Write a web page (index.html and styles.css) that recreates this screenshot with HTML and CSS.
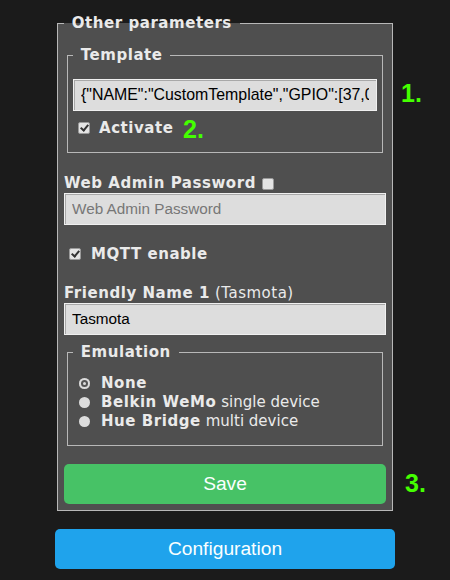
FILE: index.html
```html
<!DOCTYPE html>
<html>
<head>
<meta charset="utf-8">
<link rel="stylesheet" href="styles.css">
</head>
<body>
<div class="wrap">
  <fieldset class="outer">
    <legend><b>&nbsp;Other parameters&nbsp;</b></legend>
    <fieldset class="inner tpl">
      <legend><b>&nbsp;Template&nbsp;</b></legend>
      <input class="field tplfield" type="text" value='{"NAME":"CustomTemplate","GPIO":[37,0,0,0,0,0,0,0,0,0,0,0,0],"FLAG":0,"BASE":18}'>
      <div class="check-row act">
        <span class="cb checked"></span><b>Activate</b><span class="num num2">2.</span>
      </div>
    </fieldset>
    <div class="label-row pw"><b>Web Admin Password</b><span class="cb"></span></div>
    <input class="field" type="text" placeholder="Web Admin Password">
    <div class="check-row mqtt"><span class="cb checked"></span><b>MQTT enable</b></div>
    <div class="label-row fn"><b>Friendly Name 1</b><span class="paren">(Tasmota)</span></div>
    <input class="field" type="text" value="Tasmota">
    <fieldset class="inner emu">
      <legend><b>&nbsp;Emulation&nbsp;</b></legend>
      <div class="radios">
        <div class="radio-row"><span class="rb sel"></span><b>None</b></div>
        <div class="radio-row"><span class="rb"></span><b>Belkin WeMo</b> single device</div>
        <div class="radio-row"><span class="rb"></span><b>Hue Bridge</b> multi device</div>
      </div>
    </fieldset>
    <button class="btn save">Save</button>
  </fieldset>
  <button class="btn config">Configuration</button>
</div>
<span class="num num1">1.</span>
<span class="num num3">3.</span>
</body>
</html>
```
FILE: styles.css
```css
html, body {
  margin: 0;
  padding: 0;
  background: #1b1b1b;
}
body {
  font-family: "DejaVu Sans", Verdana, sans-serif;
  font-size: 15px;
  color: #eaeaea;
  width: 450px;
  height: 580px;
  position: relative;
  overflow: hidden;
}
b {
  font-weight: bold;
  letter-spacing: 0.55px;
}
.wrap {
  width: 340px;
  margin: 0 auto;
  padding-top: 13px;
}
fieldset {
  margin: 0;
  border: 1px solid #b8b8b8;
  background: #4f4f4f;
  min-width: 0;
}
legend {
  padding: 0 2px;
  line-height: 20px;
  font-size: 15px;
}
.outer {
  margin: 0 2px;
  padding: 0 6px 6px;
}
.inner {
  margin: 0 3px;
  padding: 0 5px;
}
.tpl {
  margin-top: 12px;
  padding-top: 14px;
  padding-bottom: 14px;
}
.field {
  display: block;
  width: 100%;
  box-sizing: border-box;
  height: 32px;
  margin: 0;
  padding: 0 7px;
  background: #dddddd;
  color: #000;
  border: 1px solid #f0f0f0;
  box-shadow: inset 1px 1px 0 #a8a8a8;
  border-radius: 0;
  font-family: "Liberation Sans", Arial, sans-serif;
  font-size: 15.3px;
  outline: none;
}
.tplfield { font-size: 15.9px; }
.field::placeholder { color: #777777; }
.check-row, .label-row {
  line-height: 20px;
  display: flex;
  align-items: center;
}
.act { margin-top: 7px; position: relative; }
.act .cb { margin: 0 9px 0 5px; }
.cb {
  display: inline-block;
  width: 12px;
  height: 12px;
  box-sizing: border-box;
  background: #e4e4e4;
  border: 1px solid #9a9a9a;
  border-radius: 2px;
  position: relative;
  flex: none;
}
.cb.checked::after {
  content: "";
  position: absolute;
  left: 3px;
  top: 0px;
  width: 3px;
  height: 6px;
  border: solid #333;
  border-width: 0 2px 2px 0;
  transform: rotate(40deg);
}
.pw { margin-top: 20px; }
.pw .cb { margin-left: 6px; margin-top: 1px; }
.mqtt { margin-top: 19px; }
.mqtt .cb { margin: 0 10px 0 5px; }
.fn { margin-top: 19px; }
.fn b { margin-right: 5px; }
.paren { letter-spacing: 0.5px; }
.emu {
  margin-top: 7px;
  padding-top: 12px;
  padding-bottom: 14px;
}
.radios { line-height: 19px; }
.radio-row { display: flex; align-items: center; }
.radio-row b { margin-right: 5px; }
.rb {
  display: inline-block;
  width: 11px;
  height: 11px;
  border-radius: 50%;
  background: #dcdcdc;
  margin: 0 11px 0 6px;
  flex: none;
  box-sizing: border-box;
}
.rb.sel {
  box-shadow: inset 0 0 0 2px #dcdcdc, inset 0 0 0 4px #555;
}
.btn {
  display: block;
  width: 100%;
  border: 0;
  border-radius: 5px;
  color: #faffff;
  font-family: "Liberation Sans", Arial, sans-serif;
  font-size: 19.2px;
  line-height: 40px;
  height: 40px;
  padding: 0;
}
.save {
  margin-top: 18px;
  background: #47c266;
}
.config {
  margin-top: 18px;
  background: #1fa3ec;
}
.num {
  font-family: "Liberation Sans", Arial, sans-serif;
  font-weight: bold;
  font-size: 25px;
  color: #44ff00;
  line-height: 25px;
}
.num1 { position: absolute; left: 401px; top: 81px; }
.num3 { position: absolute; left: 405px; top: 471px; }
.num2 { position: absolute; left: 110px; top: -1px; }
```
